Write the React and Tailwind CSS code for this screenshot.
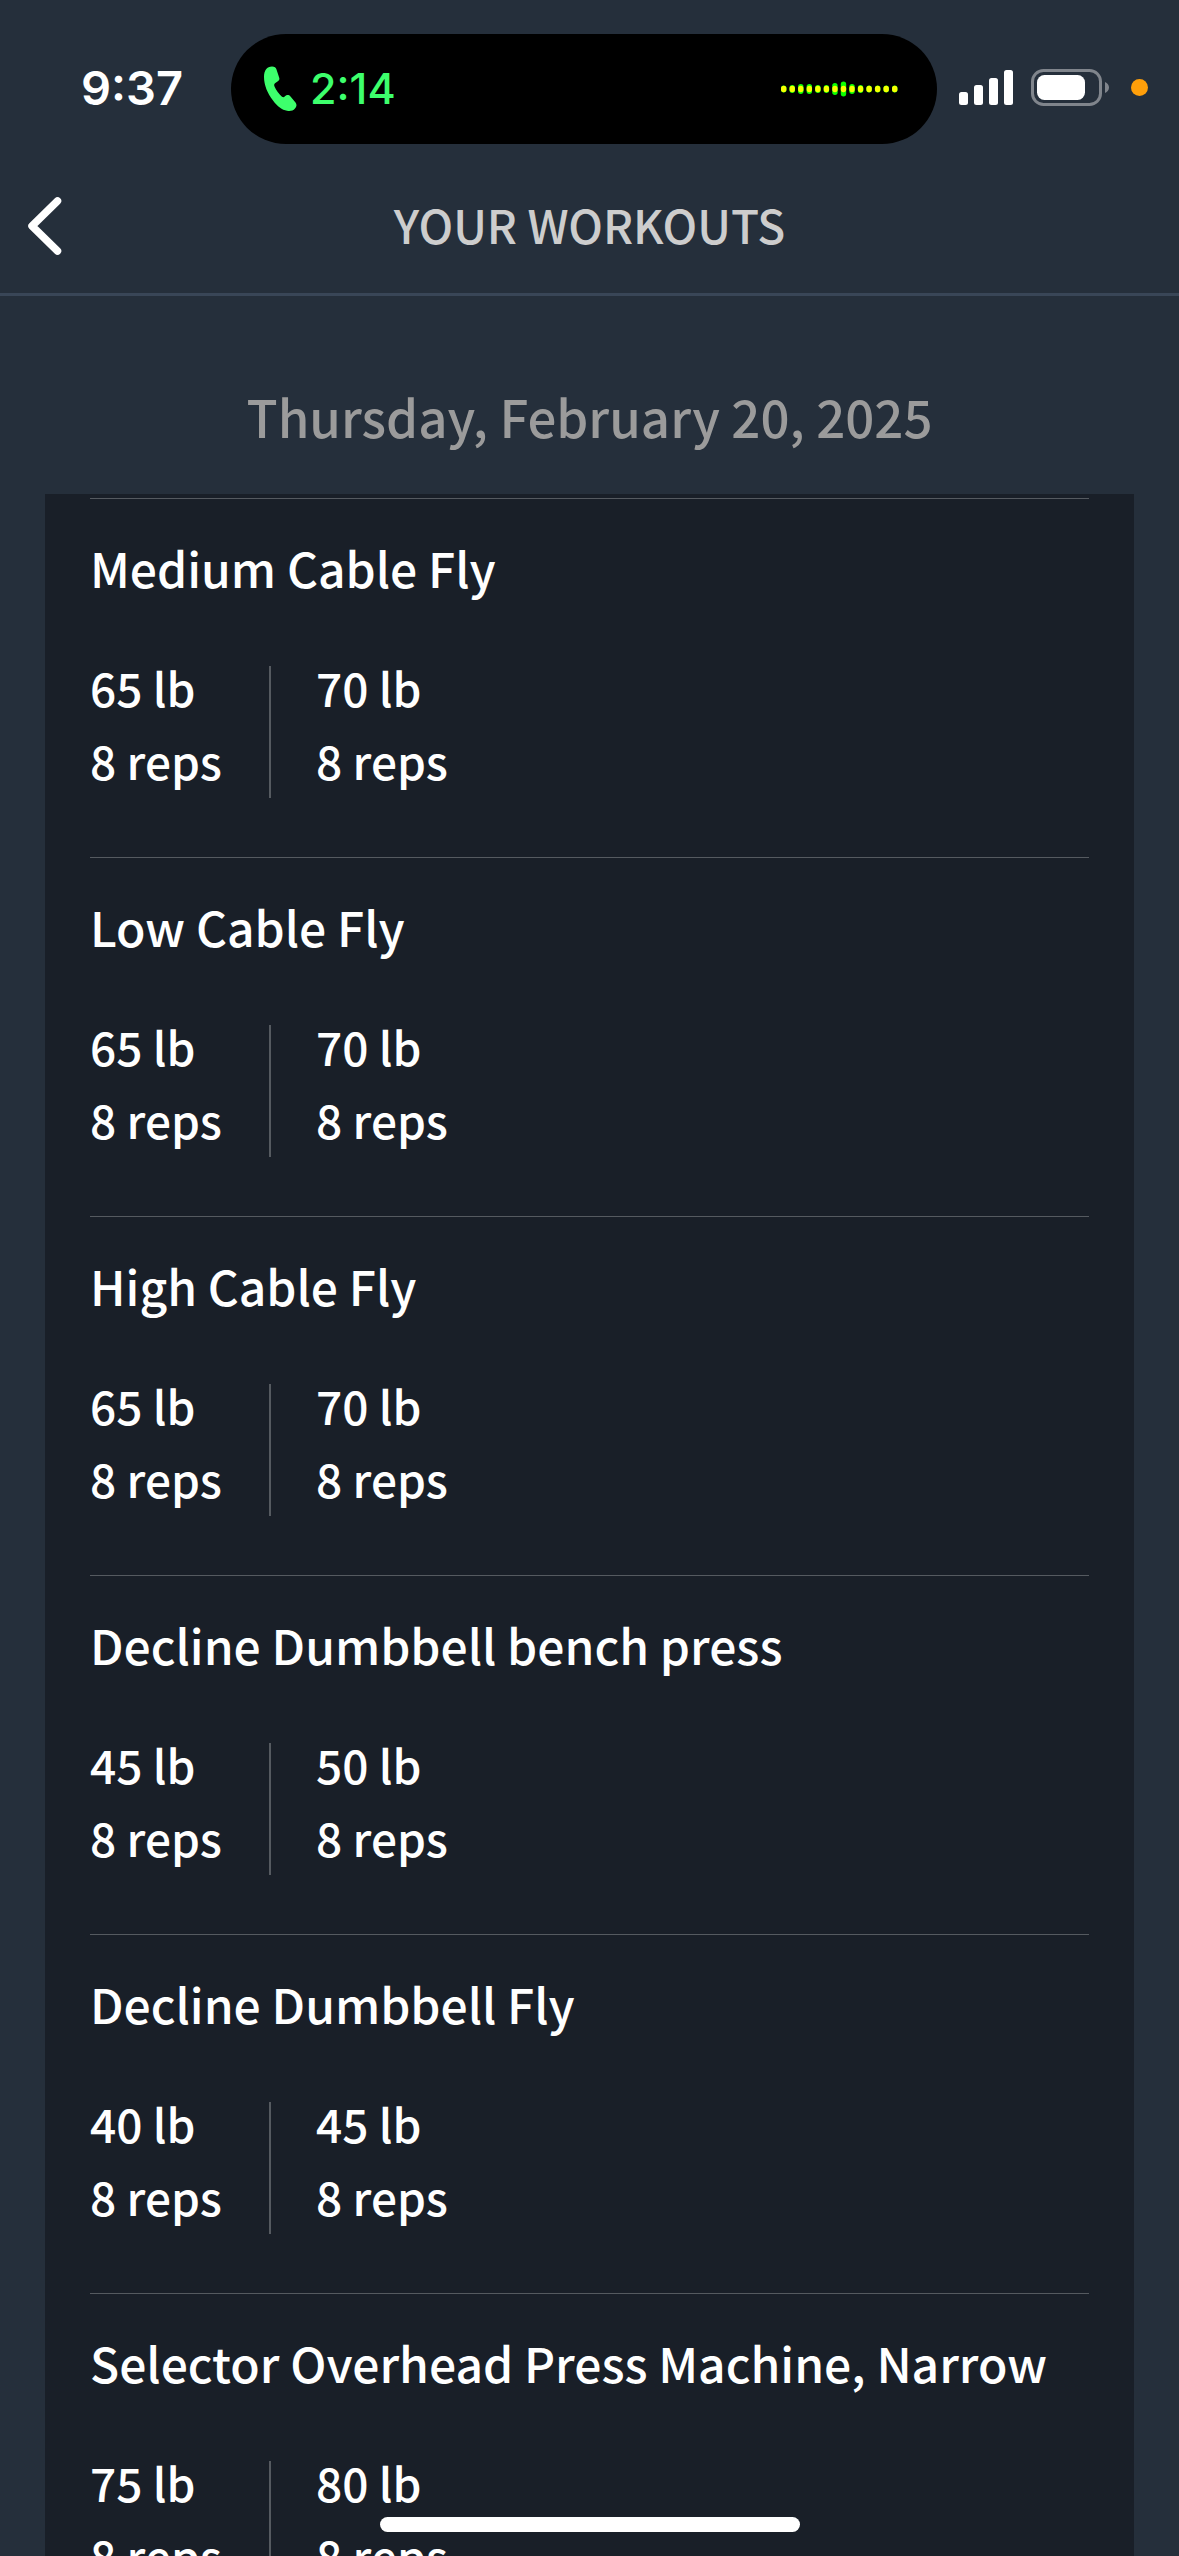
import React from "react";

const exercises = [
  { name: "Medium Cable Fly", sets: [{ weight: 65, reps: 8 }, { weight: 70, reps: 8 }] },
  { name: "Low Cable Fly", sets: [{ weight: 65, reps: 8 }, { weight: 70, reps: 8 }] },
  { name: "High Cable Fly", sets: [{ weight: 65, reps: 8 }, { weight: 70, reps: 8 }] },
  { name: "Decline Dumbbell bench press", sets: [{ weight: 45, reps: 8 }, { weight: 50, reps: 8 }] },
  { name: "Decline Dumbbell Fly", sets: [{ weight: 40, reps: 8 }, { weight: 45, reps: 8 }] },
  { name: "Selector Overhead Press Machine, Narrow", sets: [{ weight: 75, reps: 8 }, { weight: 80, reps: 8 }] },
];

const levels = [7, 8, 10, 10, 8, 8, 12, 15, 10, 8, 7, 7, 7, 7];

const PhoneIcon = () => (
  <svg width="33" height="46" viewBox="14 8 33 46" fill="#3dff6c" aria-hidden="true">
    <path d="M22 8.5C24.500 8.500 26 9.500 26.500 11.500L29.300 20C29.700 21.500 29 22.500 27.500 23.500L25 25.200C24 26 24 27 24.500 28.500C26 32 29 36 32 38.700C33 39.500 34 39.200 35 38.200C36.500 36.700 38.800 36.500 40.500 38.500L45.500 44.500C47 46.500 46.800 48.500 45 50.500C43 52.800 40.500 53.300 37 52.800C32 52 27.500 48.500 23 42.500C17.500 35.500 14 27 14 19C14 12.500 17 8.500 22 8.500Z" />
  </svg>
);

const Waveform = () => (
  <svg width="120" height="20" viewBox="0 0 120 20" className="ml-auto" aria-hidden="true">
    {levels.map((h, i) => (
      <g key={i}>
        <rect x={2 + i * 8.54} y={10 - h / 2} width="5.4" height={h} rx="2.7" fill="#0cff00" />
        <rect x={2 + i * 8.54} y="6.7" width="5.4" height="6.600" rx="2.7" fill="#f8ff00" />
      </g>
    ))}
  </svg>
);

const SignalIcon = () => (
  <svg width="54" height="36" viewBox="0 0 54 36" fill="#fff" aria-hidden="true">
    <rect x="0" y="22" width="9" height="13" rx="2.500" />
    <rect x="15" y="15" width="9" height="20" rx="2.500" />
    <rect x="30" y="8" width="9" height="27" rx="2.500" />
    <rect x="45" y="0" width="9" height="35" rx="2.500" />
  </svg>
);

const BatteryIcon = () => (
  <svg width="78" height="37" viewBox="0 0 78 37" aria-hidden="true">
    <rect x="1.500" y="1.500" width="68" height="34" rx="11" fill="none" stroke="#80858c" strokeWidth="3" />
    <rect x="6" y="6" width="48" height="25" rx="7.500" fill="#fff" />
    <path d="M74 13C76.500 14 78 16 78 18.500S76.500 23 74 24Z" fill="#80858c" />
  </svg>
);

const StatusBar = () => (
  <div className="grid grid-cols-[231px_1fr_242px] items-center pt-[34px]">
    <span className="pr-12 pb-[3px] text-right font-['Inter',sans-serif] text-[47px] leading-[48px] font-semibold">9:37</span>
    <div className="flex h-[110px] items-center rounded-full bg-black pr-[38px] pl-[33px]">
      <PhoneIcon />
      <span className="ml-[13px] pb-[3px] font-['Inter',sans-serif] text-[43px] leading-[48px] font-medium text-[#3dff6c]">2:14</span>
      <Waveform />
    </div>
    <div className="flex items-center pb-[3px] pl-[22px]">
      <SignalIcon />
      <span className="ml-[18px]"><BatteryIcon /></span>
      <span className="ml-[22px] size-[17px] rounded-full bg-[#ff9f0a]" />
    </div>
  </div>
);

const Exercise = ({ exercise }) => (
  <li className="h-[359px] border-t border-[#555a60]">
    <h3 className="pt-9 text-[48px] leading-[64px]">{exercise.name}</h3>
    <div className="mt-[67px] flex text-[46px]">
      {exercise.sets.map((set, i) => (
        <div key={i} className="h-[132px] w-[181px] border-[#555a60] not-last:border-r-2 not-first:w-auto not-first:pl-[45px]">
          <p className="h-[73px] leading-[42px]">{set.weight} lb</p>
          <p className="leading-[42px]">{set.reps} reps</p>
        </div>
      ))}
    </div>
  </li>
);

const App = () => {
  return (
    <div className="flex h-screen flex-col overflow-hidden bg-[#252f3b] font-['Noto_Sans_CJK_JP',sans-serif] font-medium text-white">
      <StatusBar />
      <header className="grid grid-cols-[1fr_auto_1fr] items-center border-b-3 border-[#394657] pt-11 pb-[29px]">
        <button type="button" aria-label="Back" className="ml-[27px] w-9 py-2">
          <svg width="36" height="60" viewBox="0 0 36 60" fill="none" stroke="#fff" strokeWidth="7.500" strokeLinecap="round" strokeLinejoin="round">
            <path d="M30.500 5L5 30L30.500 55" />
          </svg>
        </button>
        <h1 className="pb-1 text-[46px] leading-[64px] text-[#cdcdcd]">YOUR WORKOUTS</h1>
      </header>

      <main className="flex min-h-0 flex-1 flex-col px-[45px]">
        <h2 className="pt-[85px] pb-[43px] text-center text-[51px] leading-[70px] text-[#9b9b9b]">Thursday, February 20, 2025</h2>
        <ul className="min-h-0 flex-1 overflow-hidden bg-[#191f28] px-[45px] pt-1">
          {exercises.map((exercise) => (
            <Exercise key={exercise.name} exercise={exercise} />
          ))}
        </ul>
      </main>

      <div className="fixed bottom-6 left-1/2 h-[15px] w-[420px] -translate-x-1/2 rounded-full bg-white" />
    </div>
  );
};

export default App;
